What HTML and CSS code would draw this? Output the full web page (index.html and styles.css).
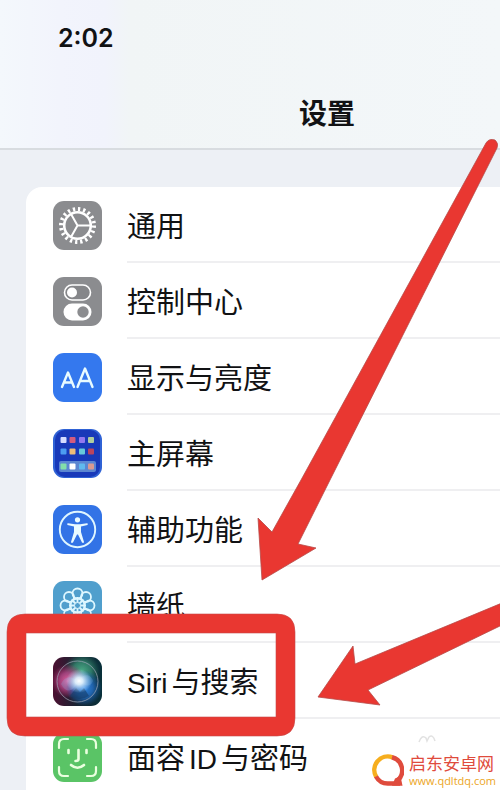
FILE: index.html
```html
<!DOCTYPE html>
<html lang="zh-CN">
<head>
<meta charset="utf-8">
<meta name="viewport" content="width=device-width, initial-scale=1">
<title>设置</title>
<link rel="stylesheet" href="styles.css">
</head>
<body>
<header class="top-bar">
  <time class="clock">2:02</time>
  <h1 class="title">设置</h1>
</header>
<main class="content">
  <ul class="settings">
    <li class="row">
      <svg class="icon" viewBox="0 0 49 49" aria-hidden="true">
        <rect width="49" height="49" rx="11" fill="#8b8c8f"/>
        <g fill="none" stroke="#fff">
          <circle cx="24.500" cy="24.500" r="16.500" stroke-width="4" stroke-dasharray="2.300 2.883"/>
          <circle cx="24.500" cy="24.500" r="13.300" stroke-width="2.600"/>
          <path d="M24.500 24.500H38M24.500 24.500L18 13M24.500 24.500L18 36" stroke-width="2"/>
        </g>
      </svg>
      <a class="label" href="#general">通用</a>
    </li>
    <li class="row">
      <svg class="icon" viewBox="0 0 49 49" aria-hidden="true">
        <rect width="49" height="49" rx="11" fill="#8b8c8f"/>
        <rect x="11.500" y="8" width="26" height="15" rx="7.500" fill="#858689" stroke="#fff" stroke-width="1.600"/>
        <circle cx="19" cy="15.500" r="5" fill="#fff"/>
        <rect x="10.500" y="26.500" width="28" height="17" rx="8.500" fill="#fff"/>
        <circle cx="30" cy="35" r="5.700" fill="#8b8c8f"/>
      </svg>
      <a class="label" href="#control">控制中心</a>
    </li>
    <li class="row">
      <svg class="icon" viewBox="0 0 49 49" aria-hidden="true">
        <rect width="49" height="49" rx="11" fill="#3478ee"/>
        <g fill="none" stroke="#e9fbff" stroke-width="2.400" stroke-linecap="round" stroke-linejoin="round">
          <path d="M9 34L15 19.500L21 34M11.200 29.500H18.800"/>
          <path d="M24.500 34L32 15.500L39.500 34M27.300 28H36.700"/>
        </g>
      </svg>
      <a class="label" href="#display">显示与亮度</a>
    </li>
    <li class="row">
      <svg class="icon" viewBox="0 0 49 49" aria-hidden="true">
        <rect width="49" height="49" rx="11" fill="#2f62d5"/>
        <rect x="2" y="1" width="45" height="47" rx="10" fill="#1839b9"/>
        <rect x="6" y="32" width="37" height="11" rx="2" fill="#5b86d1"/>
        <g>
          <rect x="7.500" y="8" width="6" height="6" rx="1" fill="#d5dcff"/>
          <rect x="16.500" y="8" width="6" height="6" rx="1" fill="#d35b7e"/>
          <rect x="26" y="8" width="6" height="6" rx="1" fill="#9278ef"/>
          <rect x="35" y="8" width="6" height="6" rx="1" fill="#b0ce9e"/>
          <rect x="7.500" y="19.500" width="6" height="6" rx="1" fill="#4c9df1"/>
          <rect x="16.500" y="19.500" width="6" height="6" rx="1" fill="#edbd78"/>
          <rect x="26" y="19.500" width="6" height="6" rx="1" fill="#67c9da"/>
          <rect x="35" y="19.500" width="6" height="6" rx="1" fill="#b9455f"/>
          <rect x="7.500" y="34.500" width="6" height="6" rx="1" fill="#83dfaa"/>
          <rect x="16.500" y="34.500" width="6" height="6" rx="1" fill="#fff"/>
          <rect x="26" y="34.500" width="6" height="6" rx="1" fill="#60b9ee"/>
          <rect x="35" y="34.500" width="6" height="6" rx="1" fill="#d99a91"/>
        </g>
      </svg>
      <a class="label" href="#home">主屏幕</a>
    </li>
    <li class="row">
      <svg class="icon" viewBox="0 0 49 49" aria-hidden="true">
        <rect width="49" height="49" rx="11" fill="#3273e6"/>
        <circle cx="24.500" cy="24.500" r="17.700" fill="none" stroke="#dff6ff" stroke-width="1.900"/>
        <circle cx="24.500" cy="14.800" r="2.600" fill="#e9faff"/>
        <path d="M15 18.200L22 19.200H27L34 18.200Q35.500 18.500 34.500 20L28 21.500V27L31 37Q30.500 38.700 29 37.500L25 29.500H24L20 37.500Q18.500 38.700 18 37L21 27V21.500L14.500 20Q13.500 18.500 15 18.200Z" fill="#e9faff"/>
      </svg>
      <a class="label" href="#accessibility">辅助功能</a>
    </li>
    <li class="row">
      <svg class="icon" viewBox="0 0 49 49" aria-hidden="true">
        <rect width="49" height="49" rx="11" fill="#509fcd"/>
        <g fill="none" stroke="#def7ff" stroke-width="1.800">
          <circle cx="24.500" cy="12.500" r="5"/><circle cx="33" cy="16" r="5"/>
          <circle cx="36.500" cy="24.500" r="5"/><circle cx="33" cy="33" r="5"/>
          <circle cx="24.500" cy="36.500" r="5"/><circle cx="16" cy="33" r="5"/>
          <circle cx="12.500" cy="24.500" r="5"/><circle cx="16" cy="16" r="5"/>
          <circle cx="24.500" cy="24.500" r="7"/>
          <path d="M24.500 16V33M16 24.500H33M18.500 18.500L30.500 30.500M30.500 18.500L18.500 30.500"/>
        </g>
        <circle cx="24.500" cy="24.500" r="3" fill="#509fcd" stroke="#def7ff"/>
      </svg>
      <a class="label" href="#wallpaper">墙纸</a>
    </li>
    <li class="row">
      <svg class="icon" viewBox="0 0 49 49" aria-hidden="true">
        <defs>
          <linearGradient id="siri-base" x1="0" y1="0" x2="1" y2="0">
            <stop offset="0" stop-color="#4c1031"/><stop offset="0.500" stop-color="#172432"/><stop offset="1" stop-color="#08303a"/>
          </linearGradient>
          <radialGradient id="siri-pink"><stop offset="0" stop-color="#e765a4"/><stop offset="0.500" stop-color="#b8488a" stop-opacity="0.800"/><stop offset="1" stop-color="#b32c6b" stop-opacity="0"/></radialGradient>
          <radialGradient id="siri-green"><stop offset="0" stop-color="#4caa86"/><stop offset="0.500" stop-color="#378f74" stop-opacity="0.800"/><stop offset="1" stop-color="#26745f" stop-opacity="0"/></radialGradient>
          <radialGradient id="siri-blue"><stop offset="0" stop-color="#338ae6"/><stop offset="0.500" stop-color="#2470c8" stop-opacity="0.800"/><stop offset="1" stop-color="#175cae" stop-opacity="0"/></radialGradient>
          <radialGradient id="siri-glow"><stop offset="0" stop-color="#fff"/><stop offset="0.300" stop-color="#e9f7ff" stop-opacity="0.900"/><stop offset="1" stop-color="#bcdfff" stop-opacity="0"/></radialGradient>
        </defs>
        <rect width="49" height="49" rx="11" fill="url(#siri-base)"/>
        <circle cx="29" cy="14" r="18" fill="url(#siri-green)"/>
        <circle cx="15" cy="24" r="17" fill="url(#siri-pink)"/>
        <circle cx="31" cy="31" r="18" fill="url(#siri-blue)"/>
        <path d="M8 27C14 38 21 34 26 23C31 15 39 18 40 24C37 32 31 28 25 24C17 18 12 19 8 27Z" fill="#7eb9e8" opacity="0.250"/>
        <path d="M17 39L23 31L27 35L31 31L36 39Q26 45 17 39Z" fill="#153a64" opacity="0.600"/>
        <ellipse cx="26" cy="24" rx="13" ry="12" fill="url(#siri-glow)"/>
        <circle cx="24.500" cy="24.500" r="20.500" fill="none" stroke="#a2a9bb" stroke-width="1" opacity="0.700"/>
      </svg>
      <a class="label" href="#siri"><span class="latin">Siri</span>与搜索</a>
    </li>
    <li class="row">
      <svg class="icon" viewBox="0 0 49 49" aria-hidden="true">
        <rect width="49" height="49" rx="11" fill="#5ac466"/>
        <g fill="none" stroke="#eaffdf" stroke-width="2.200" stroke-linecap="round">
          <path d="M6 15V11Q6 6 11 6H15M34 6H38Q43 6 43 11V15M6 34V38Q6 43 11 43H15M34 43H38Q43 43 43 38V34"/>
          <path d="M15.500 17V20M33.500 17V20M25.500 17V26Q25.500 28 22.500 28M18 32Q24.500 37.500 31 32" stroke-width="2.600"/>
        </g>
      </svg>
      <a class="label" href="#faceid">面容<span class="latin mid">ID</span>与密码</a>
    </li>
  </ul>
</main>
<svg class="marks" viewBox="0 0 500 790" aria-hidden="true">
  <path fill="#e93731" stroke="#c64c49" stroke-width="0.600" fill-rule="evenodd" d="M25 614H277Q295 614 295 632V718Q295 736 277 736H25Q7 736 7 718V632Q7 614 25 614ZM26 633V717H276V633Z"/>
  <path fill="#e93731" stroke="#b64a48" stroke-width="0.800" d="M262 580L258 518L272 532L301 480L486 143Q489 138 495 140Q499 143 497 148L330 480L298 544L316 548Z"/>
  <path fill="#e93731" stroke="#b64a48" stroke-width="0.800" d="M318 697L353 646L355 664L502 603V625L368 690L380 705Z"/>
  <path fill="none" stroke="#e2e2e2" stroke-width="1.500" d="M419 742Q422 734 426 738L427 741L429 737Q433 734 435 741"/>
</svg>
<aside class="watermark">
  <svg class="brand-mark" viewBox="0 0 32 33" aria-hidden="true">
    <path d="M20.500 3.300A13.500 13.500 0 0 0 4.300 23" fill="none" stroke="#f6ae1e" stroke-width="4.500"/>
    <path d="M20 3.200A13.500 13.500 0 0 1 25.500 26.500M28 29.500H16A13.500 13.500 0 0 1 4 22.500" fill="none" stroke="#df4b3d" stroke-width="4.500"/>
    <path d="M23 24.500L28.500 22L30.500 31.700H20Z" fill="#df4b3d"/>
  </svg>
  <div class="brand-text">
    <span class="brand-name">启东安卓网</span>
    <span class="brand-url">www.qdltdq.com</span>
  </div>
</aside>
</body>
</html>
```
FILE: styles.css
```css
* {
  box-sizing: border-box;
}

body {
  position: relative;
  height: 100vh;
  margin: 0;
  overflow: hidden;
  background: #edf0f5;
  color: #111214;
  font-family: Inter, "Noto Sans CJK SC", sans-serif;
}

.top-bar {
  display: flex;
  flex-direction: column;
  gap: 40px;
  padding: 20px 0 16px;
  border-bottom: 2px solid #d8dce0;
  background: linear-gradient(90deg, #f4f8fc 0, #f2f4fc 60px, #f1f3fc 105px, #f1f5f6 130px, #f3f7f9 100%);
}

.clock {
  padding-left: 58px;
  font-size: 25px;
  font-weight: 600;
  line-height: 36px;
}

.title {
  margin: 0;
  padding-left: 154px;
  font-size: 28px;
  font-weight: 700;
  line-height: 36px;
  text-align: center;
}

.content {
  padding: 37px 0 0 26px;
}

.settings {
  margin: 0;
  padding: 0;
  border-radius: 16px 0 0 0;
  background: #fff;
  list-style: none;
}

.row {
  display: flex;
  align-items: stretch;
  height: 76px;
  padding-left: 27px;
  gap: 25px;
}

.icon {
  flex: none;
  align-self: center;
  width: 49px;
  height: 49px;
}

.label {
  flex: 1;
  padding-top: 2px;
  border-bottom: 2px solid #efeff1;
  color: inherit;
  font-size: 29px;
  line-height: 76px;
  text-decoration: none;
  white-space: nowrap;
}

.latin {
  margin-right: 4px;
  font-family: "Liberation Sans", sans-serif;
  font-size: 28px;
}

.mid {
  margin-left: 4px;
}

.marks {
  position: absolute;
  top: 0;
  left: 0;
  width: 500px;
  height: 790px;
  pointer-events: none;
}

.watermark {
  position: absolute;
  right: 4px;
  bottom: 0;
  display: flex;
  align-items: flex-start;
  gap: 5px;
}

.brand-mark {
  width: 32px;
  height: 33px;
}

.brand-text {
  display: flex;
  flex-direction: column;
  padding-bottom: 2px;
}

.brand-name {
  color: #df4b3d;
  font-size: 17px;
  line-height: 20px;
}

.brand-url {
  color: #eca51d;
  font-family: "Open Sans", sans-serif;
  font-size: 11px;
  line-height: 14px;
}
```
